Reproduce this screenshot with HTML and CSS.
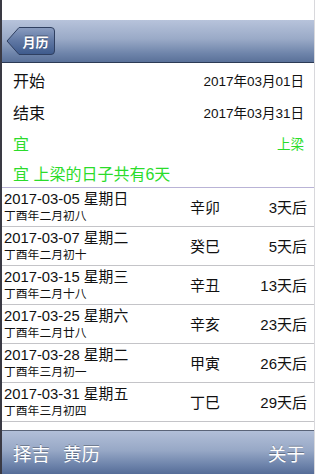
FILE: index.html
```html
<!DOCTYPE html>
<html>
<head>
<meta charset="utf-8">
<link rel="stylesheet" href="styles.css">
</head>
<body>
<div class="app">
  <div class="status"></div>
  <div class="navbar">
    <div class="back">
      <svg class="back-shape" width="50" height="30" viewBox="0 0 50 30">
        <defs>
          <linearGradient id="bg" x1="0" y1="0" x2="0" y2="1">
            <stop offset="0" stop-color="#8b9dc0"/>
            <stop offset="0.5" stop-color="#5f77a3"/>
            <stop offset="1" stop-color="#3e5a8c"/>
          </linearGradient>
        </defs>
        <path d="M1 15 L13 1.5 H45 Q48.5 1.5 48.5 5 V25 Q48.5 28.5 45 28.5 H13 Z" fill="url(#bg)" stroke="#2f3f60" stroke-width="1"/>
      </svg>
      <span class="back-text">月历</span>
    </div>
  </div>
  <div class="info">
    <div class="info-row"><span class="lbl">开始</span><span class="val">2017年03月01日</span></div>
    <div class="info-row"><span class="lbl">结束</span><span class="val">2017年03月31日</span></div>
    <div class="info-row green"><span class="lbl">宜</span><span class="val">上梁</span></div>
    <div class="info-row green"><span class="lbl">宜 上梁的日子共有6天</span></div>
  </div>
  <div class="list">
    <div class="item"><div class="dates"><div class="d">2017-03-05 星期日</div><div class="l">丁酉年二月初八</div></div><div class="gz">辛卯</div><div class="after">3天后</div></div>
    <div class="item"><div class="dates"><div class="d">2017-03-07 星期二</div><div class="l">丁酉年二月初十</div></div><div class="gz">癸巳</div><div class="after">5天后</div></div>
    <div class="item"><div class="dates"><div class="d">2017-03-15 星期三</div><div class="l">丁酉年二月十八</div></div><div class="gz">辛丑</div><div class="after">13天后</div></div>
    <div class="item"><div class="dates"><div class="d">2017-03-25 星期六</div><div class="l">丁酉年二月廿八</div></div><div class="gz">辛亥</div><div class="after">23天后</div></div>
    <div class="item"><div class="dates"><div class="d">2017-03-28 星期二</div><div class="l">丁酉年三月初一</div></div><div class="gz">甲寅</div><div class="after">26天后</div></div>
    <div class="item"><div class="dates"><div class="d">2017-03-31 星期五</div><div class="l">丁酉年三月初四</div></div><div class="gz">丁巳</div><div class="after">29天后</div></div>
  </div>
  <div class="spacer"></div>
  <div class="toolbar">
    <div class="tb-left"><span>择吉</span><span>黄历</span></div>
    <span class="tb-right">关于</span>
  </div>
</div>
</body>
</html>
```

FILE: styles.css
```css
* { box-sizing: border-box; }
html, body { margin: 0; padding: 0; background: #fff; }
body {
  width: 315px;
  height: 474px;
  overflow: hidden;
  font-family: "Liberation Sans", "Noto Sans CJK SC", sans-serif;
  color: #111;
}
.app {
  width: 315px;
  height: 474px;
  display: flex;
  flex-direction: column;
  border-left: 2px solid #3a3a44;
  border-right: 1px solid #d8d8dc;
}
.status { height: 20px; background: #fff; }
.navbar {
  height: 43px;
  background: linear-gradient(to bottom, #b7c3db 0%, #9aaac7 45%, #6e84aa 80%, #5a7199 100%);
  border-bottom: 1px solid #2c3a55;
  display: flex;
  align-items: center;
  padding-left: 4px;
}
.back {
  position: relative;
  width: 50px;
  height: 30px;
  display: flex;
  align-items: center;
  justify-content: center;
}
.back-shape { position: absolute; left: 0; top: 0; }
.back-text {
  position: relative;
  color: #fff;
  font-size: 13px;
  font-weight: bold;
  padding-left: 9px;
  text-shadow: 0 -1px 0 rgba(0,0,0,0.4);
}
.info { display: flex; flex-direction: column; }
.info-row {
  height: 31px;
  display: flex;
  align-items: center;
  justify-content: space-between;
  padding: 0 10px 0 11px;
}
.info-row:first-child { height: 33px; }
.info-row .lbl { font-size: 16px; }
.info-row .val { font-size: 13.5px; }
.info-row.green { color: #2bdc2b; }
.info-row:last-child { height: 30px; border-bottom: 1px solid #b9b3d6; }
.list { display: flex; flex-direction: column; }
.item {
  height: 39px;
  display: flex;
  align-items: center;
  border-bottom: 1px solid #c4c4c8;
  padding: 0 7px 0 2px;
}
.dates { width: 186px; display: flex; flex-direction: column; }
.d { font-size: 14.8px; line-height: 18px; }
.l { font-size: 11.8px; line-height: 16px; }
.gz { width: 60px; font-size: 15px; margin-top: -2px; }
.after { flex: 1; text-align: right; font-size: 15px; margin-top: -2px; }
.spacer { flex: 1; }
.toolbar {
  height: 44px;
  border-top: 1px solid #5a6478;
  background: linear-gradient(to bottom, #b2bfd8 0%, #97a8c6 45%, #6c82aa 80%, #566d98 100%);
  display: flex;
  align-items: center;
  justify-content: space-between;
  padding: 0 9px 0 11px;
  color: #fff;
  font-size: 18.5px;
  text-shadow: 0 -1px 0 rgba(0,0,0,0.3);
}
.tb-left { display: flex; gap: 13px; }
```
